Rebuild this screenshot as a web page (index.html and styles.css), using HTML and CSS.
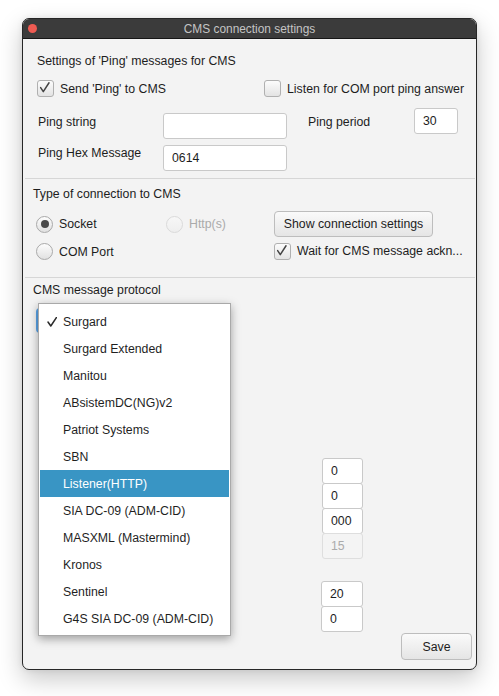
FILE: index.html
```html
<!DOCTYPE html>
<html>
<head>
<meta charset="utf-8">
<title>CMS connection settings</title>
<link rel="stylesheet" href="styles.css">
</head>
<body>
<div class="window">
  <div class="titlebar">
    <span class="close-dot"></span>
    <span class="title">CMS connection settings</span>
    <span></span>
  </div>

  <section class="sec sec-ping">
    <div class="sec-title">Settings of 'Ping' messages for CMS</div>
    <div class="check-row">
      <label class="check"><span class="box"><svg viewBox="0 0 17 17"><path d="M4 8.5 L7 13 L13.5 3"/></svg></span><span>Send 'Ping' to CMS</span></label>
      <label class="check"><span class="box"></span><span>Listen for COM port ping answer</span></label>
    </div>
    <div class="ping-grid">
      <div class="ping-left">
        <span class="lbl">Ping string</span><span class="field"></span>
        <span class="lbl">Ping Hex Message</span><span class="field">0614</span>
      </div>
      <div class="ping-right">
        <span class="lbl">Ping period</span><span class="field">30</span>
      </div>
    </div>
  </section>

  <div class="sep"></div>

  <section class="sec sec-conn">
    <div class="sec-title">Type of connection to CMS</div>
    <div class="conn-grid">
      <label class="radio"><span class="dot on"></span><span>Socket</span></label>
      <label class="radio disabled"><span class="dot"></span><span>Http(s)</span></label>
      <div class="btn btn-show">Show connection settings</div>
      <label class="radio"><span class="dot"></span><span>COM Port</span></label>
      <span></span>
      <label class="check"><span class="box"><svg viewBox="0 0 17 17"><path d="M4 8.5 L7 13 L13.5 3"/></svg></span><span>Wait for CMS message ackn...</span></label>
    </div>
  </section>

  <div class="sep"></div>

  <section class="sec sec-proto">
    <div class="sec-title">CMS message protocol</div>
    <div class="combo">Surgard</div>
    <div class="field-stack stack-a">
      <span class="field">0</span>
      <span class="field">0</span>
      <span class="field">000</span>
      <span class="field disabled">15</span>
    </div>
    <div class="field-stack stack-b">
      <span class="field">20</span>
      <span class="field">0</span>
    </div>
    <div class="footer">
      <div class="btn btn-save">Save</div>
    </div>
  </section>

  <ul class="popup">
    <li class="item"><span class="tick"><svg viewBox="0 0 10 10"><path d="M1 5 L3.8 9 L9.5 0.5"/></svg></span>Surgard</li>
    <li class="item"><span class="tick"></span>Surgard Extended</li>
    <li class="item"><span class="tick"></span>Manitou</li>
    <li class="item"><span class="tick"></span>ABsistemDC(NG)v2</li>
    <li class="item"><span class="tick"></span>Patriot Systems</li>
    <li class="item"><span class="tick"></span>SBN</li>
    <li class="item selected"><span class="tick"></span>Listener(HTTP)</li>
    <li class="item"><span class="tick"></span>SIA DC-09 (ADM-CID)</li>
    <li class="item"><span class="tick"></span>MASXML (Mastermind)</li>
    <li class="item"><span class="tick"></span>Kronos</li>
    <li class="item"><span class="tick"></span>Sentinel</li>
    <li class="item"><span class="tick"></span>G4S SIA DC-09 (ADM-CID)</li>
  </ul>
</div>
</body>
</html>
```
FILE: styles.css
```css
* { box-sizing: border-box; }
html, body { margin: 0; padding: 0; }
body {
  background: #ffffff;
  width: 499px;
  height: 696px;
  overflow: hidden;
  font-family: "Liberation Sans", Arial, sans-serif;
  font-size: 12.3px;
  color: #1d1d1d;
}
.window {
  position: relative;
  margin: 18px 0 0 22px;
  width: 455px;
  height: 652px;
  border: 1px solid #262626;
  border-radius: 7px;
  background: #f3f3f3;
  box-shadow: 0 9px 24px rgba(0,0,0,0.22), 0 0 6px rgba(0,0,0,0.08);
  overflow: hidden;
}
.titlebar {
  height: 20px;
  background: #3b3b3b;
  border-bottom: 1px solid #161616;
  display: grid;
  grid-template-columns: 1fr auto 1fr;
  align-items: center;
}
.close-dot {
  width: 9px;
  height: 9px;
  margin-left: 5px;
  border-radius: 50%;
  background: #ef5b52;
}
.title {
  color: #c4c4c4;
  font-size: 11.9px;
  line-height: 18px;
}
.sec-title { line-height: 16px; white-space: nowrap; }

/* Section 1 */
.sec-ping {
  height: 139px;
  padding: 14px 0 0 14px;
}
.check-row {
  margin-top: 11px;
  display: grid;
  grid-template-columns: 227px auto;
  height: 17px;
}
.check {
  display: flex;
  align-items: center;
  gap: 6px;
  white-space: nowrap;
}
.box {
  width: 17px;
  height: 17px;
  flex: none;
  border: 1px solid #b0b0b0;
  border-radius: 3px;
  background: linear-gradient(#fcfcfc, #e3e3e3);
}
.box svg { display: block; width: 15px; height: 15px; }
.box svg path {
  fill: none;
  stroke: #444444;
  stroke-width: 1.7;
  stroke-linecap: round;
  stroke-linejoin: round;
  transform: translate(-1px, -1px);
}
.ping-grid {
  margin-top: 11px;
  display: flex;
  gap: 21px;
  padding-left: 1px;
}
.ping-left {
  padding-top: 5px;
  display: grid;
  grid-template-columns: 125px 124px;
  row-gap: 6px;
}
.ping-right {
  display: grid;
  grid-template-columns: 106px 44px;
}
.ping-right .lbl { margin-top: 6px; }
.ping-left .lbl:first-child { margin-top: 1px; }
.lbl { line-height: 16px; white-space: nowrap; }
.field {
  display: block;
  height: 26px;
  line-height: 24px;
  padding-left: 8px;
  background: #ffffff;
  border: 1px solid #c9c9c9;
  border-radius: 3px;
}
.field.disabled {
  background: #f4f4f4;
  border-color: #dedede;
  color: #ababab;
}

.sep {
  height: 1px;
  margin: 0 1px 0 2px;
  background: #d6d6d6;
}

/* Section 2 */
.sec-conn {
  height: 98px;
  padding: 7px 0 0 10px;
}
.conn-grid {
  margin-top: 9px;
  padding-left: 3px;
  display: grid;
  grid-template-columns: 130px 108px auto;
  grid-template-rows: 26px 25px;
  row-gap: 2px;
  align-items: center;
}
.radio {
  display: flex;
  align-items: center;
  gap: 6px;
  white-space: nowrap;
}
.dot {
  width: 17px;
  height: 17px;
  flex: none;
  border-radius: 50%;
  border: 1px solid #a9a9a9;
  background: linear-gradient(#fdfdfd, #e1e1e1);
  display: flex;
  align-items: center;
  justify-content: center;
}
.dot.on::after {
  content: "";
  width: 8px;
  height: 8px;
  border-radius: 50%;
  background: #4a4a4a;
}
.radio.disabled { color: #aaaaaa; }
.radio.disabled .dot {
  border-color: #dadada;
  background: linear-gradient(#f7f7f7, #eeeeee);
}
.btn {
  height: 26px;
  display: flex;
  align-items: center;
  justify-content: center;
  border: 1px solid #bdbdbd;
  border-radius: 4px;
  background: linear-gradient(#fafafa, #e5e5e5);
  white-space: nowrap;
  color: #1d1d1d;
}
.btn-show { width: 159px; }
.conn-grid .check { margin-top: -1px; }

/* Section 3 */
.sec-proto {
  padding: 4px 0 0 10px;
}
.combo {
  margin-top: 10px;
  margin-left: 3px;
  width: 190px;
  height: 25px;
  border: 2px solid #5aa4e8;
  border-radius: 4px;
  background: #fff;
  padding-left: 24px;
  line-height: 21px;
}
.field-stack {
  display: flex;
  flex-direction: column;
}
.field-stack .field + .field { margin-top: -1px; }
.stack-a { margin: 125px 0 0 289px; width: 41px; }
.stack-b { margin: 22px 0 0 288px; width: 42px; }
.footer {
  display: flex;
  justify-content: flex-end;
  padding-right: 4px;
  margin-top: 1px;
}
.btn-save { width: 71px; height: 27px; }

/* Popup */
.popup {
  position: absolute;
  left: 15px;
  top: 284px;
  width: 193px;
  height: 333px;
  margin: 0;
  padding: 4px 1px;
  list-style: none;
  background: #ffffff;
  border: 1px solid #a9a9a9;
  box-shadow: 0 3px 9px rgba(0,0,0,0.35);
}
.item {
  height: 27px;
  display: flex;
  align-items: center;
  white-space: nowrap;
  color: #1f1f1f;
}
.item.selected {
  background: #3995c4;
  color: #ffffff;
}
.tick {
  width: 23px;
  flex: none;
  padding-left: 7px;
  display: flex;
  align-items: center;
}
.tick svg { width: 10px; height: 10px; display: block; }
.tick svg path {
  fill: none;
  stroke: #2a2a2a;
  stroke-width: 1.5;
  stroke-linecap: round;
  stroke-linejoin: round;
}
```
